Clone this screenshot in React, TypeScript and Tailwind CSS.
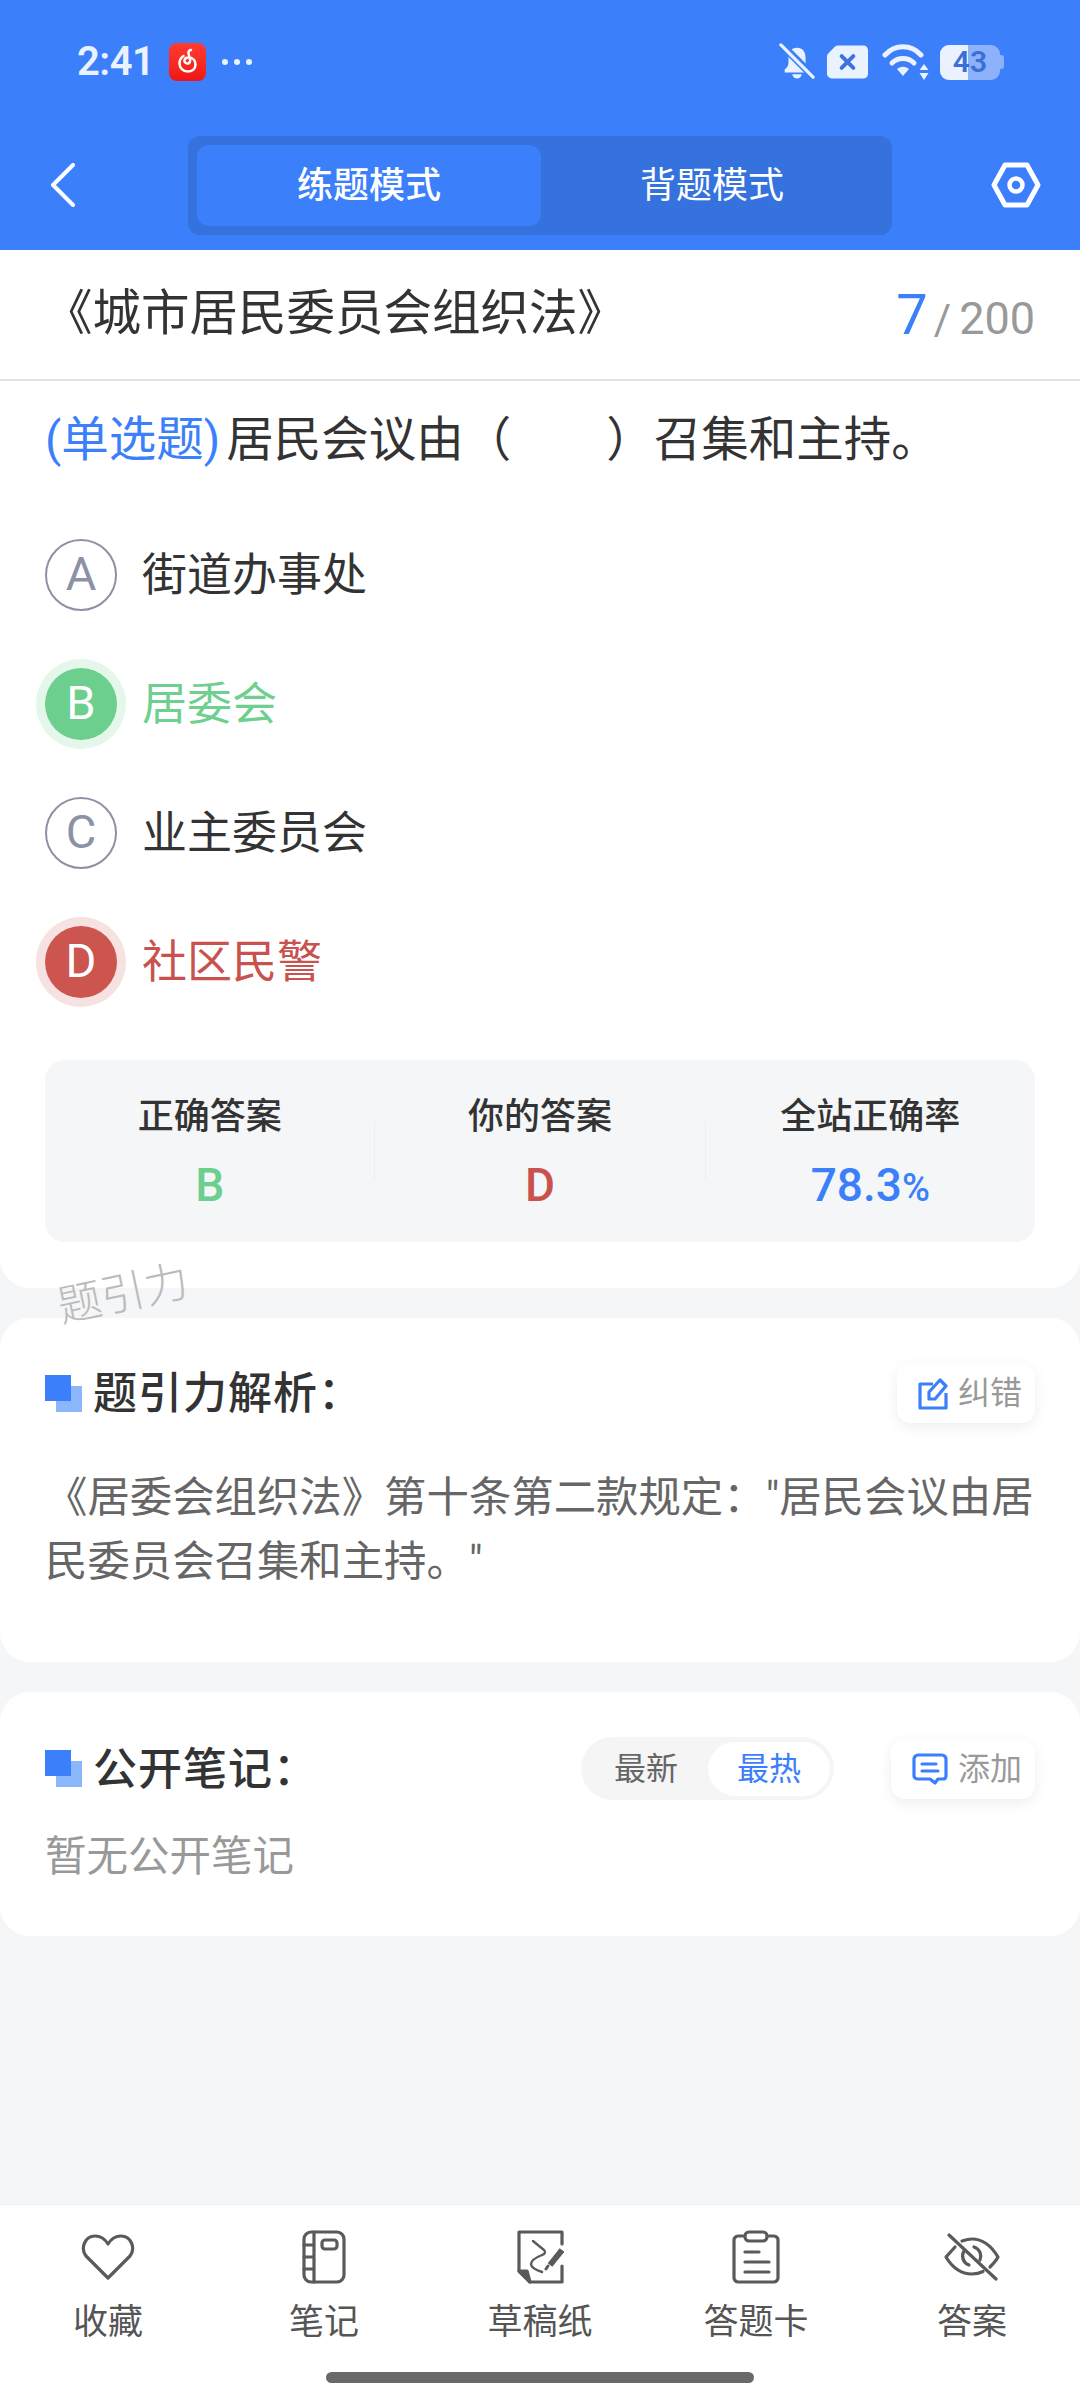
import React from "react";

const font = "font-['Roboto','Noto_Sans_CJK_SC',sans-serif]";

function StatusIcons() {
  return (
    <div className="flex items-center">
      <svg width="36" height="38" viewBox="0 0 38 38" className="mr-[11px]">
        <path d="M19 4c-6 0-9 4.500-9 10v6c0 3-2 5-4 7v3h26v-3c-2-2-4-4-4-7v-6c0-5.500-3-10-9-10z" fill="#eaf1ff" />
        <path d="M14 32h10c-.5 3-2.500 4.500-5 4.500S14.500 35 14 32z" fill="#eaf1ff" />
        <path d="M2 0l35 35" stroke="#3b7ffa" strokeWidth="8" />
        <path d="M2 1l34 34" stroke="#eaf1ff" strokeWidth="3.500" strokeLinecap="round" />
      </svg>
      <svg width="43" height="36" viewBox="0 0 44 36" className="mr-[13px]">
        <path d="M12 1h26c3 0 5 2 5 5v24c0 3-2 5-5 5H7c-3 0-6-2-6-5V13c0-2 .5-3 2-4.500l5-5C9 2 10.500 1 12 1z" fill="#eaf1ff" />
        <path d="M16 12l12 12M28 12L16 24" stroke="#3a73dc" strokeWidth="4" strokeLinecap="round" />
      </svg>
      <svg width="47" height="38" viewBox="0 0 47 38" className="mr-[11px]">
        <path d="M3 12c10-11 26-11 36 0" fill="none" stroke="#eaf1ff" strokeWidth="5" strokeLinecap="round" />
        <path d="M10 20c6-6 16-6 22 0" fill="none" stroke="#eaf1ff" strokeWidth="5" strokeLinecap="round" />
        <path d="M15 26c4-3 8-3 12 0l-6 7z" fill="#eaf1ff" />
        <path d="M42 21l4.500 6h-9zM42 37l4.500-7h-9z" fill="#eaf1ff" />
      </svg>
      <div className="relative flex h-[35px] w-[60px] items-center justify-center overflow-hidden rounded-[9px] bg-[#8db2fb]">
        <div className="absolute left-0 top-0 h-full w-[28px] bg-[#eaf1ff]" />
        <span className="relative text-[30px] font-semibold leading-none text-[#3a6fd6]">43</span>
      </div>
      <div className="h-[14px] w-[4px] rounded-r-[3px] bg-[#8db2fb]" />
    </div>
  );
}

function StatusBar() {
  return (
    <div className="flex h-[124px] items-center justify-between pl-[77px] pr-[76px]">
      <div className="flex items-center">
        <span className="w-[73px] text-[40px] font-semibold leading-none tracking-[-0.5px] text-[#eaf1ff]">2:41</span>
        <div className="ml-[19px] flex h-[38px] w-[37px] items-center justify-center rounded-[8px] bg-gradient-to-b from-[#ff3b30] to-[#f01414]">
          <svg width="24" height="28" viewBox="0 0 24 28">
            <path d="M15 2c-1.500 0-3 1.500-2.500 3.500l1.500 6c.5 2-.5 4-2.500 4s-3.500-1.500-3-3.500c.4-1.500 2-2.500 4-2.500 4 0 7 2.500 7 7s-3.500 7-8 7-8-3.500-8-8c0-3 1.500-6 4-7.500" fill="none" stroke="#fff" strokeWidth="2.500" strokeLinecap="round" />
          </svg>
        </div>
        <div className="ml-[16px] flex gap-[6px]">
          <div className="h-[6px] w-[6px] rounded-full bg-[#eaf1ff]" />
          <div className="h-[6px] w-[6px] rounded-full bg-[#eaf1ff]" />
          <div className="h-[6px] w-[6px] rounded-full bg-[#eaf1ff]" />
        </div>
      </div>
      <StatusIcons />
    </div>
  );
}

function NavBar() {
  return (
    <div className="flex h-[126px] items-start pl-[50px] pr-[39px] pt-[12px]">
      <svg width="26" height="44" viewBox="0 0 26 44" className="mt-[27px]">
        <path d="M23 2L3 22l20 20" fill="none" stroke="#fff" strokeWidth="4" strokeLinecap="round" strokeLinejoin="round" />
      </svg>
      <div className="ml-[112px] flex h-[99px] w-[704px] items-center rounded-[12px] bg-[#3672de] px-[9px]">
        <div className="flex h-[81px] w-[344px] items-center justify-center rounded-[12px] bg-[#3b7ffa] text-[36px] font-medium text-white">
          练题模式
        </div>
        <div className="flex h-[81px] flex-1 items-center justify-center text-[36px] font-normal text-white">
          背题模式
        </div>
      </div>
      <svg width="50" height="46" viewBox="0 0 50 46" className="ml-auto mt-[26px]">
        <path d="M14 3h22l11 20-11 20H14L3 23z" fill="none" stroke="#fff" strokeWidth="5" strokeLinejoin="round" />
        <circle cx="25" cy="23" r="6.500" fill="none" stroke="#fff" strokeWidth="4.500" />
      </svg>
    </div>
  );
}

function Option({ letter, text, state }: { letter: string; text: string; state?: "right" | "wrong" }) {
  const circle =
    state === "right"
      ? "bg-[#6ccf8e] text-white ring-[9px] ring-[#e5f7eb]"
      : state === "wrong"
        ? "bg-[#cc5550] text-white ring-[9px] ring-[#f7e2e2]"
        : "border-2 border-[#8d91a5] text-[#8d91a5]";
  const label = state === "right" ? "text-[#6fcf8f]" : state === "wrong" ? "text-[#c9524e]" : "text-[#333]";
  return (
    <div className="flex h-[129px] items-center">
      <div className={`flex h-[72px] w-[72px] items-center justify-center rounded-full text-[47px] font-normal ${circle}`}>
        {letter}
      </div>
      <div className={`ml-[25px] mt-[3px] text-[45px] ${label}`}>{text}</div>
    </div>
  );
}

function Stat({ label, children }: { label: string; children: React.ReactNode }) {
  return (
    <div className="flex flex-1 flex-col items-center">
      <div className="mt-[2px] text-[36px] font-medium leading-[48px] text-[#333]">{label}</div>
      <div className="mt-[18px] h-[52px] text-[46px] font-medium leading-[52px]">{children}</div>
    </div>
  );
}

function Marker() {
  return (
    <div className="relative h-[37px] w-[37px] shrink-0">
      <div className="absolute bottom-0 right-0 h-[26px] w-[26px] bg-[#8ab6fb]" />
      <div className="absolute left-0 top-0 h-[26px] w-[26px] bg-[#3b7ffa]" />
    </div>
  );
}

function SmallButton({ icon, text }: { icon: React.ReactNode; text: string }) {
  return (
    <div className="flex h-[60px] items-center rounded-[14px] bg-white pl-[21px] pr-[13px] shadow-[0_4px_14px_rgba(0,0,0,0.07)]">
      {icon}
      <span className="ml-[10px] text-[32px] text-[#999]">{text}</span>
    </div>
  );
}

function TabItem({ icon, label }: { icon: React.ReactNode; label: string }) {
  return (
    <div className="flex flex-1 flex-col items-center">
      <div className="flex h-[56px] items-center justify-center">{icon}</div>
      <div className="mt-[14px] text-[35px] leading-[48px] text-[#555]">{label}</div>
    </div>
  );
}

const iconProps = { fill: "none", stroke: "#5a5a5a", strokeWidth: 3.2, strokeLinecap: "round", strokeLinejoin: "round" } as const;

export default function App() {
  return (
    <div className={`relative flex h-[2400px] w-[1080px] flex-col overflow-hidden bg-[#f4f6f8] ${font}`}>
      <div className="h-[250px] shrink-0 bg-[#3b7ffa]">
        <StatusBar />
        <NavBar />
      </div>

      <div className="h-[1038px] shrink-0 rounded-b-[30px] bg-white">
        <div className="flex h-[131px] items-center justify-between border-b-2 border-[#e3e3e3] pl-[44px] pr-[45px]">
          <div className="text-[48.500px] leading-none text-[#333]">《城市居民委员会组织法》</div>
          <div className="flex items-baseline text-[#999]">
            <span className="text-[56px] font-normal leading-none text-[#3b7ffa]">7</span>
            <span className="ml-[6px] text-[42px] leading-none">/</span>
            <span className="ml-[8px] text-[45px] leading-none">200</span>
          </div>
        </div>
        <div className="px-[45px]">
          <div className="mt-[25px] text-[47.500px] leading-[68px] text-[#333]">
            <span className="mr-[6px] text-[#3b7ffa]">(单选题)</span>居民会议由（　　）召集和主持。
          </div>
          <div className="mt-[36px]">
            <Option letter="A" text="街道办事处" />
            <Option letter="B" text="居委会" state="right" />
            <Option letter="C" text="业主委员会" />
            <Option letter="D" text="社区民警" state="wrong" />
          </div>
          <div className="mt-[34px] flex h-[182px] items-center rounded-[20px] bg-[#f4f6f8]">
            <Stat label="正确答案"><span className="text-[#6ccf8e]">B</span></Stat>
            <div className="h-[60px] w-px bg-[#eceef0]" />
            <Stat label="你的答案"><span className="text-[#c9524e]">D</span></Stat>
            <div className="h-[60px] w-px bg-[#eceef0]" />
            <Stat label="全站正确率">
              <span className="text-[#3b7ffa]">78.3<span className="text-[38px]">%</span></span>
            </Stat>
          </div>
        </div>
      </div>

      <div className="mt-[30px] h-[344px] shrink-0 rounded-[30px] bg-white px-[45px] pt-[45px]">
        <div className="flex items-center justify-between">
          <div className="flex items-center">
            <Marker />
            <div className="ml-[11px] mt-[2px] text-[44px] font-medium leading-none tracking-[1px] text-[#333]">题引力解析：</div>
          </div>
          <SmallButton
            text="纠错"
            icon={
              <svg width="30" height="34" viewBox="0 0 30 34" fill="none" stroke="#3b7ffa" strokeWidth="3.200" strokeLinejoin="round">
                <path d="M15 8H2v24h26V17" />
                <path d="M11 23v-7L22 4l6 6-11 13z" />
              </svg>
            }
          />
        </div>
        <div className="mt-[43px] text-[42.400px] leading-[64px] text-[#666]">
          《居委会组织法》第十条第二款规定："居民会议由居民委员会召集和主持。"
        </div>
      </div>

      <div className="mt-[30px] h-[244px] shrink-0 rounded-[30px] bg-white px-[45px] pt-[45px]">
        <div className="flex items-center">
          <Marker />
          <div className="ml-[11px] mt-[2px] text-[44px] font-medium leading-none tracking-[1px] text-[#333]">公开笔记：</div>
          <div className="ml-auto flex h-[63px] w-[253px] items-center rounded-full bg-[#f5f5f5] pr-[4px]">
            <span className="flex-1 pl-[3px] text-center text-[32px] text-[#666]">最新</span>
            <span className="flex h-[54px] w-[122px] items-center justify-center rounded-full bg-white text-[32px] text-[#3b7ffa]">最热</span>
          </div>
          <div className="ml-[57px]">
            <SmallButton
              text="添加"
              icon={
                <svg width="36" height="32" viewBox="0 0 36 32" fill="none" stroke="#3b7ffa" strokeWidth="3.200" strokeLinecap="round" strokeLinejoin="round">
                  <path d="M6 2h24c2 0 4 2 4 4v17c0 2-1 3-3 3h-5l-3 4-5-4H6c-2 0-4-1-4-3V6c0-2 2-4 4-4z" />
                  <path d="M10 11h14M10 18h16" />
                </svg>
              }
            />
          </div>
        </div>
        <div className="mt-[27px] text-[41.500px] leading-[60px] text-[#999]">暂无公开笔记</div>
      </div>

      <div className="mt-auto flex h-[196px] shrink-0 flex-col items-center border-t border-[#eeeeee] bg-white pt-[24px]">
        <div className="flex w-full">
          <TabItem
            label="收藏"
            icon={
              <svg width="54" height="46" viewBox="0 0 54 46" {...iconProps}>
                <path d="M27 44L5 22C-1 14 4 2 14 2c6 0 10 3 13 8 3-5 7-8 13-8 10 0 15 12 9 20z" />
              </svg>
            }
          />
          <TabItem
            label="笔记"
            icon={
              <svg width="44" height="54" viewBox="0 0 44 54" {...iconProps}>
                <rect x="2" y="2" width="40" height="50" rx="7" />
                <path d="M12 2v50M2 15h10M2 27h10M2 39h10" />
                <rect x="20" y="10" width="15" height="9" rx="3" />
              </svg>
            }
          />
          <TabItem
            label="草稿纸"
            icon={
              <svg width="48" height="54" viewBox="0 0 48 54" {...iconProps}>
                <path d="M46 14V2H3v39l11 11h32V36" />
                <path d="M3 41h8l3 11z" fill="#5a5a5a" />
                <path d="M17 11l11 9c2 2 1 4-2 5-5 2-11 5-11 9 0 3 5 6 11 8" strokeWidth="2.400" />
                <path d="M34 35l12-15" strokeWidth="6" strokeLinecap="butt" />
                <path d="M30 39l2-3" strokeWidth="3" />
              </svg>
            }
          />
          <TabItem
            label="答题卡"
            icon={
              <svg width="48" height="54" viewBox="0 0 48 54" {...iconProps}>
                <path d="M11 6H6c-2 0-4 2-4 4v38c0 2 2 4 4 4h36c2 0 4-2 4-4V10c0-2-2-4-4-4h-5" />
                <rect x="13" y="2" width="22" height="9" rx="4" />
                <path d="M13 22h14M13 32h24M13 42h24" />
              </svg>
            }
          />
          <TabItem
            label="答案"
            icon={
              <svg width="58" height="48" viewBox="0 0 58 48" {...iconProps}>
                <path d="M12 14L3 24c6 10 15 17 26 17 4 0 8-1 11-2.500M19 8c3-1 6-2 10-2 11 0 20 8 26 18-2 4-5 7-8 10" />
                <path d="M21 18c-3 5-1 12 5 14M31 14c6 2 8 8 6 13" />
                <path d="M6 2l47 44" />
              </svg>
            }
          />
        </div>
        <div className="mt-auto mb-[17px] h-[11px] w-[428px] rounded-full bg-[#696969]" />
      </div>

      <div className="absolute left-[57px] top-[1272px] -rotate-[12deg] text-[44px] font-light leading-none text-[#bbbbbb]">题引力</div>
    </div>
  );
}
